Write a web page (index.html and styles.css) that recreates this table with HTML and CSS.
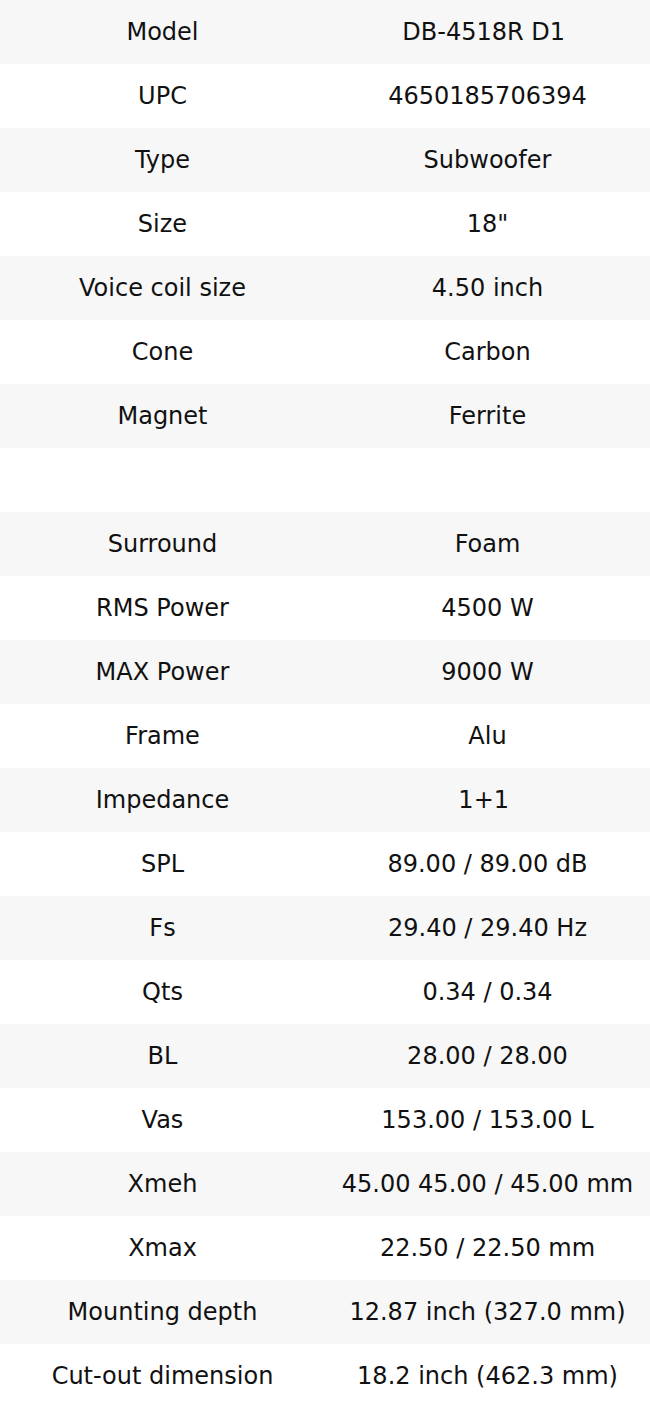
FILE: index.html
```html
<!DOCTYPE html>
<html>
<head>
<meta charset="utf-8">
<link rel="stylesheet" href="styles.css">
</head>
<body>
<table class="specs">
<tbody>
<tr><td>Model</td><td>DB-4518R D1&nbsp;</td></tr>
<tr><td>UPC</td><td>4650185706394</td></tr>
<tr><td>Type</td><td>Subwoofer</td></tr>
<tr><td>Size</td><td>18"</td></tr>
<tr><td>Voice coil size</td><td>4.50 inch</td></tr>
<tr><td>Cone</td><td>Carbon</td></tr>
<tr><td>Magnet</td><td>Ferrite</td></tr>
<tr><td></td><td></td></tr>
<tr><td>Surround</td><td>Foam</td></tr>
<tr><td>RMS Power</td><td>4500 W</td></tr>
<tr><td>MAX Power</td><td>9000 W</td></tr>
<tr><td>Frame</td><td>Alu</td></tr>
<tr><td>Impedance</td><td>1+1&nbsp;</td></tr>
<tr><td>SPL</td><td>89.00 / 89.00 dB</td></tr>
<tr><td>Fs</td><td>29.40 / 29.40 Hz</td></tr>
<tr><td>Qts</td><td>0.34 / 0.34</td></tr>
<tr><td>BL</td><td>28.00 / 28.00</td></tr>
<tr><td>Vas</td><td>153.00 / 153.00 L</td></tr>
<tr><td>Xmeh</td><td>45.00 45.00 / 45.00 mm</td></tr>
<tr><td>Xmax</td><td>22.50 / 22.50 mm</td></tr>
<tr><td>Mounting depth</td><td>12.87 inch (327.0 mm)</td></tr>
<tr><td>Cut-out dimension</td><td>18.2 inch (462.3 mm)</td></tr>
</tbody>
</table>
</body>
</html>
```
FILE: styles.css
```css
html, body {
  margin: 0;
  padding: 0;
  background: #ffffff;
}
.specs {
  width: 650px;
  border-collapse: collapse;
  table-layout: fixed;
  font-family: "DejaVu Sans", sans-serif;
  font-size: 24px;
  color: #111111;
}
.specs td {
  width: 50%;
  height: 64px;
  padding: 0;
  text-align: center;
  vertical-align: middle;
  white-space: nowrap;
}
.specs tr:nth-child(odd) {
  background: #f7f7f7;
}
```
